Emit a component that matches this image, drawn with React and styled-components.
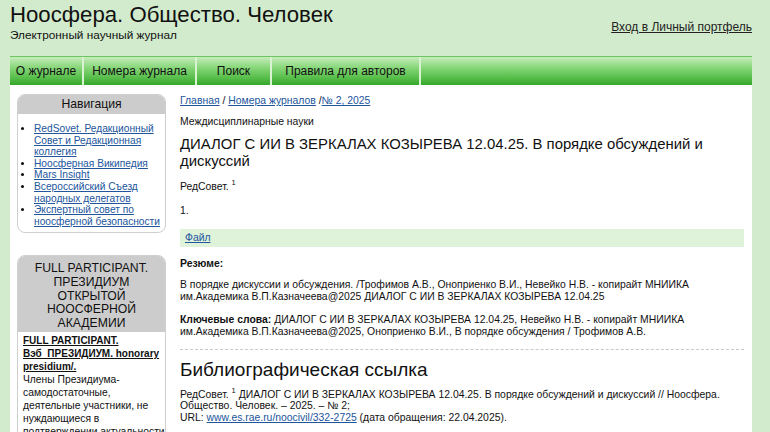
import React from "react";
import styled, { createGlobalStyle } from "styled-components";

const Global = createGlobalStyle`
  body {
    margin: 0;
    background: #d3ebcd;
    font-family: "Liberation Sans", Arial, sans-serif;
    color: #111;
  }
`;

const Page = styled.div`
  width: 742px;
  margin-left: 10px;
`;

const Header = styled.div`
  display: flex;
  justify-content: space-between;
  align-items: flex-start;
  height: 56px;
`;

const Brand = styled.div`
  padding-top: 3px;
  h1 {
    margin: 0;
    font-size: 22.2px;
    font-weight: normal;
    line-height: 24px;
  }
  p {
    margin: 1px 0 0;
    font-size: 11.8px;
    line-height: 14px;
  }
`;

const Login = styled.a`
  margin-top: 20px;
  font-size: 12px;
  color: #222;
  text-decoration: underline;
`;

const Menu = styled.nav`
  display: flex;
  height: 29px;
  box-sizing: border-box;
  border-top: 1px solid #6cc55f;
  background: linear-gradient(#c6ecbd 0%, #8cd97e 35%, #56bd49 75%, #35a62b 100%);
`;

const MenuItem = styled.div`
  width: ${(p) => p.w}px;
  display: flex;
  align-items: center;
  justify-content: center;
  font-size: 12px;
  color: #111;
  border-right: 2px solid #d9f2d2;
  box-sizing: border-box;
`;

const Main = styled.div`
  display: flex;
  gap: 14px;
  background: #fff;
  padding: 9px 8px 0 7px;
  min-height: 360px;
`;

const Sidebar = styled.aside`
  width: 149px;
  flex-shrink: 0;
  display: flex;
  flex-direction: column;
  gap: 22px;
`;

const Block = styled.div`
  border: 1px solid #cfcfcf;
  border-radius: 8px;
  overflow: hidden;
`;

const BlockHead = styled.div`
  background: #cccccc;
  text-align: center;
  font-size: 12.2px;
  line-height: ${(p) => p.lh || 19}px;
  padding: ${(p) => p.pad || "0"};
`;

const NavList = styled.ul`
  margin: 0;
  padding: 9px 0 5px 16px;
  font-size: 10.2px;
  line-height: 11.6px;
  li a {
    color: #22559c;
    text-decoration: underline;
  }
`;

const BlockBody = styled.div`
  padding: 2px 0 0 5px;
  font-size: 10.3px;
  line-height: 13px;
  a {
    color: #111;
    font-size: 10px;
    font-weight: bold;
    text-decoration: underline;
  }
`;

const Content = styled.main`
  flex: 1;
  font-size: 10.4px;
  line-height: 12px;
`;

const Crumbs = styled.div`
  font-size: 10.4px;
  line-height: 13px;
  a {
    color: #22559c;
    text-decoration: underline;
  }
`;

const Section = styled.div`
  margin-top: 9px;
`;

const Title = styled.h2`
  margin: 7.5px 0 0;
  font-size: 14.9px;
  font-weight: normal;
  line-height: 17px;
`;

const Para = styled.p`
  margin: ${(p) => p.mt}px 0 0;
  line-height: ${(p) => p.lh || 12}px;
  sup {
    font-size: 7.5px;
    vertical-align: 5px;
    line-height: 0;
  }
  a {
    color: #22559c;
    text-decoration: underline;
  }
`;

const FileBar = styled.div`
  margin-top: 12px;
  background: #dff2da;
  padding: 3px 5px;
  line-height: 12px;
  a {
    color: #22559c;
    text-decoration: underline;
  }
`;

const Divider = styled.hr`
  border: none;
  border-top: 1px dashed #c8c8c8;
  margin: 11px 0 0;
`;

const SubTitle = styled.h3`
  margin: 9px 0 0;
  font-size: 19px;
  font-weight: normal;
  line-height: 22px;
`;

export default function App() {
  return (
    <>
      <Global />
      <Page>
        <Header>
          <Brand>
            <h1>Ноосфера. Общество. Человек</h1>
            <p>Электронный научный журнал</p>
          </Brand>
          <Login href="#">Вход в Личный портфель</Login>
        </Header>
        <Menu>
          <MenuItem w={74}>О журнале</MenuItem>
          <MenuItem w={113}>Номера журнала</MenuItem>
          <MenuItem w={75}>Поиск</MenuItem>
          <MenuItem w={149}>Правила для авторов</MenuItem>
        </Menu>
        <Main>
          <Sidebar>
            <Block>
              <BlockHead>Навигация</BlockHead>
              <NavList>
                <li><a href="#">RedSovet. Редакционный Совет и Редакционная коллегия</a></li>
                <li><a href="#">Ноосферная Википедия</a></li>
                <li><a href="#">Mars Insight</a></li>
                <li><a href="#">Всероссийский Съезд народных делегатов</a></li>
                <li><a href="#">Экспертный совет по ноосферной безопасности</a></li>
              </NavList>
            </Block>
            <Block>
              <BlockHead lh={13.6} pad="6px 4px 2px">
                FULL PARTICIPANT. ПРЕЗИДИУМ ОТКРЫТОЙ НООСФЕРНОЙ АКАДЕМИИ
              </BlockHead>
              <BlockBody>
                <a href="#">FULL PARTICIPANT. Вэб_ПРЕЗИДИУМ. honorary presidium/. </a>
                <br />
                Члены Президиума-самодостаточные, деятельные участники, не нуждающиеся в подтверждении актуальности своих действий и бытия
              </BlockBody>
            </Block>
          </Sidebar>
          <Content>
            <Crumbs>
              <a href="#">Главная</a> / <a href="#">Номера журналов</a> /<a href="#">№ 2, 2025</a>
            </Crumbs>
            <Section>Междисциплинарные науки</Section>
            <Title>ДИАЛОГ С ИИ В ЗЕРКАЛАХ КОЗЫРЕВА 12.04.25. В порядке обсуждений и дискуссий</Title>
            <Para mt={11}>РедСовет. <sup>1</sup></Para>
            <Para mt={12}>1.</Para>
            <FileBar><a href="#">Файл</a></FileBar>
            <Para mt={11}><b>Резюме:</b></Para>
            <Para mt={9}>
              В порядке дискуссии и обсуждения. /Трофимов А.В., Оноприенко В.И., Невейко Н.В. - копирайт МНИИКА им.Академика В.П.Казначеева@2025 ДИАЛОГ С ИИ В ЗЕРКАЛАХ КОЗЫРЕВА 12.04.25
            </Para>
            <Para mt={11}>
              <b>Ключевые слова:</b> ДИАЛОГ С ИИ В ЗЕРКАЛАХ КОЗЫРЕВА 12.04.25, Невейко Н.В. - копирайт МНИИКА им.Академика В.П.Казначеева@2025, Оноприенко В.И., В порядке обсуждения / Трофимов А.В.
            </Para>
            <Divider />
            <SubTitle>Библиографическая ссылка</SubTitle>
            <Para mt={8} lh={11.5}>
              РедСовет. <sup>1</sup> ДИАЛОГ С ИИ В ЗЕРКАЛАХ КОЗЫРЕВА 12.04.25. В порядке обсуждений и дискуссий // Ноосфера. Общество. Человек. – 2025. – № 2;
              <br />
              URL: <a href="#">www.es.rae.ru/noocivil/332-2725</a> (дата обращения: 22.04.2025).
            </Para>
          </Content>
        </Main>
      </Page>
    </>
  );
}
